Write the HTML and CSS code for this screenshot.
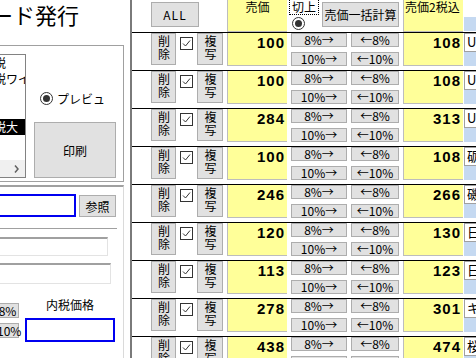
FILE: index.html
```html
<!DOCTYPE html>
<html lang="ja">
<head>
  <meta charset="UTF-8" />
  <title>カード発行</title>
  <link rel="stylesheet" href="styles.css">
</head>
<body>
  <div class="app">

    <!-- left side: print settings -->
    <aside class="side">
      <h1 class="title">カード発行</h1>

      <div class="group">
        <div class="listbox">
          <div class="item">課税</div>
          <div class="item">課税ワイド</div>
          <div class="item">&nbsp;</div>
          <div class="item">&nbsp;</div>
          <div class="item sel">課税大</div>
          <div class="hscroll">
            <span class="arrow">
              <svg width="5" height="8" viewBox="0 0 5 8"><path d="M1 0.5 L4 4 L1 7.5" fill="none" stroke="#606060" stroke-width="1.5"/></svg>
            </span>
          </div>
        </div>
        <div class="print-col">
          <label class="radio"><span class="radio-dot"></span>プレビュ</label>
          <button class="btn print">印刷</button>
        </div>
      </div>

      <div class="panel">
        <div class="ref-row">
          <div class="input"></div>
          <button class="btn ref">参照</button>
        </div>
        <div class="sep"></div>
        <div class="textbox tb1"></div>
        <div class="textbox tb2"></div>
        <div class="tax-row">
          <div class="rate-col">
            <button class="btn rate">8%</button>
            <button class="btn rate">10%</button>
          </div>
          <div class="incl-col">
            <div class="incl-label">内税価格</div>
            <div class="input incl"></div>
          </div>
        </div>
      </div>
    </aside>

    <!-- price grid -->
    <main class="grid">
      <div class="hrow">
        <button class="btn all">ALL</button>
        <div class="hcell price-h">売価</div>
        <div class="kiri-wrap">
          <div class="kiri">
            <span class="kiri-label">切上</span>
            <span class="radio-dot kiri-radio"></span>
          </div>
          <button class="btn bulk">売価一括計算</button>
        </div>
        <div class="hcell tax-h">売価2税込</div>
        <div class="hmemo"><div class="memo-top"></div><div class="memo-bot"></div></div>
      </div>
      <div id="rows"></div>
    </main>
  </div>

  <script>
    const items = [
      { price: 100, taxed: 108, name: "UCC" },
      { price: 100, taxed: 108, name: "UCC" },
      { price: 284, taxed: 313, name: "UCC" },
      { price: 100, taxed: 108, name: "砺波" },
      { price: 246, taxed: 266, name: "磯" },
      { price: 120, taxed: 130, name: "日清" },
      { price: 113, taxed: 123, name: "日清" },
      { price: 278, taxed: 301, name: "キリン" },
      { price: 438, taxed: 474, name: "桜" }
    ];

    const check = `<svg class="chk" width="13" height="13" viewBox="0 0 13 13">
      <rect x="0.5" y="0.5" width="12" height="12" fill="#fff" stroke="#333"/>
      <path d="M3 6.5 L5.5 9 L10 3.5" fill="none" stroke="#333"/></svg>`;

    function renderRows() {
      const container = document.getElementById('rows');
      container.innerHTML = '';
      items.forEach((item) => {
        const div = document.createElement('div');
        div.className = 'row';
        div.innerHTML = `
          <div class="blank"></div>
          <button class="btn tall"><span class="vtext">削除</span></button>
          ${check}
          <button class="btn tall"><span class="vtext">複写</span></button>
          <div class="num">${item.price}</div>
          <div class="pct">
            <button class="btn">8%→</button>
            <button class="btn">10%→</button>
          </div>
          <div class="pct">
            <button class="btn">←8%</button>
            <button class="btn">←10%</button>
          </div>
          <div class="num">${item.taxed}</div>
          <div class="memo">
            <div class="memo-top">${item.name}</div>
            <div class="memo-bot"></div>
          </div>
        `;
        container.appendChild(div);
      });
    }

    renderRows();
  </script>
</body>
</html>
```

FILE: styles.css
```css
body {
  margin: 0;
  background: #fff;
  font-family: "Noto Sans CJK JP", sans-serif;
  font-size: 12px;
  color: #000;
  overflow: hidden;
}

.app {
  display: flex;
  height: 358px;
  overflow: hidden;
}

/* left side */
.side {
  width: 124px;
  flex-shrink: 0;
  overflow: hidden;
  display: flex;
  flex-direction: column;
}

.title {
  margin: 0 0 0 -31px;
  height: 28px;
  font-size: 22px;
  font-weight: normal;
  line-height: 28px;
  white-space: nowrap;
}

.group {
  margin: 17px 0 0 -20px;
  width: 144px;
  height: 137px;
  flex-shrink: 0;
  box-sizing: border-box;
  border: 1px solid #a0a0a0;
  display: flex;
}

.listbox {
  margin-top: 8px;
  width: 45px;
  height: 124px;
  box-sizing: border-box;
  border: 1px solid #828282;
  display: flex;
  flex-direction: column;
  overflow: hidden;
}

.item {
  height: 16px;
  line-height: 16px;
  white-space: nowrap;
  overflow: hidden;
}

.item.sel {
  background: #000;
  color: #fff;
}

.hscroll {
  margin-top: auto;
  height: 17px;
  background: #f0f0f0;
  display: flex;
  justify-content: flex-end;
}

.hscroll .arrow {
  width: 17px;
  display: flex;
  align-items: center;
  justify-content: center;
}

.print-col {
  margin-left: 8px;
  display: flex;
  flex-direction: column;
}

.radio {
  margin: 45px 0 0 6px;
  height: 14px;
  display: flex;
  align-items: center;
  gap: 4px;
  white-space: nowrap;
}

.radio-dot {
  width: 13px;
  height: 13px;
  box-sizing: border-box;
  border: 1px solid #333;
  border-radius: 50%;
  background: #fff;
  display: flex;
  align-items: center;
  justify-content: center;
}

.radio-dot::after {
  content: "";
  width: 7px;
  height: 7px;
  border-radius: 50%;
  background: #333;
}

.btn {
  font: inherit;
  color: #000;
  background: #e1e1e1;
  border: 1px solid #adadad;
  padding: 0;
  box-sizing: border-box;
  white-space: nowrap;
}

.print {
  margin-top: 17px;
  width: 82px;
  height: 56px;
}

.panel {
  margin: 3px 0 0 -20px;
  width: 144px;
  flex: 1;
  box-sizing: border-box;
  border-top: 2px solid #a0a0a0;
  border-right: 1px solid #dadada;
}

.ref-row {
  display: flex;
  margin-top: 7px;
}

.input {
  box-sizing: border-box;
  border: 2px solid #0000f0;
  background: #fff;
}

.ref-row .input {
  width: 96px;
  height: 23px;
}

.ref {
  margin: 1px 0 0 3px;
  width: 37px;
  height: 22px;
}

.sep {
  margin-top: 11px;
  width: 137px;
  border-top: 1px solid #a0a0a0;
}

.textbox {
  box-sizing: border-box;
  border: 1px solid #e3e3e3;
  border-top: 2px solid #a0a0a0;
}

.tb1 {
  margin-top: 8px;
  width: 128px;
  height: 19px;
}

.tb2 {
  margin-top: 7px;
  width: 131px;
  height: 21px;
}

.tax-row {
  display: flex;
}

.rate-col {
  margin-left: 16px;
  width: 23px;
  display: flex;
  flex-direction: column;
}

.rate {
  height: 15px;
  line-height: 13px;
  margin-top: 5px;
}

.rate:first-child {
  margin-top: 19px;
}

.incl-col {
  margin-left: 6px;
  width: 90px;
  display: flex;
  flex-direction: column;
  align-items: center;
}

.incl-label {
  margin-top: 14px;
  line-height: 14px;
}

.incl {
  margin-top: 6px;
  width: 90px;
  height: 24px;
}

/* grid */
.grid {
  margin-left: 6px;
  flex: 1;
  border-left: 2px solid #7a7a7a;
  overflow: hidden;
}

.hrow,
.row {
  display: grid;
  grid-template-columns: 15px 25px 13px 26px 60px 56px 48px 60px 1fr;
  column-gap: 4px;
  align-items: start;
}

.hrow {
  height: 32px;
}

.row {
  height: 38px;
  box-sizing: border-box;
  border-top: 1px solid #000;
}

.all {
  grid-column: 2 / 5;
  justify-self: start;
  margin-top: 2px;
  width: 48px;
  height: 25px;
  letter-spacing: 1px;
}

.hcell {
  height: 32px;
  box-sizing: border-box;
  background: #ffff99;
  border-left: 1px solid #bdbdbd;
  border-bottom: 1px solid #bdbdbd;
  line-height: 14px;
}

.price-h {
  grid-column: 5;
  text-align: center;
}

.tax-h {
  grid-column: 8;
  padding-left: 1px;
  white-space: nowrap;
}

.kiri-wrap {
  grid-column: 6 / 8;
  display: flex;
}

.kiri {
  margin-left: -2px;
  display: flex;
  flex-direction: column;
  align-items: flex-start;
}

.kiri-label {
  margin-top: -1px;
  padding: 0 2px;
  line-height: 14px;
  border: 1px dotted #000;
}

.kiri-radio {
  margin: 2px 0 0 3px;
}

.bulk {
  margin: 2px 0 0 auto;
  width: 77px;
  height: 25px;
}

.hmemo,
.memo {
  grid-column: 9;
  margin-left: -3px;
  display: flex;
  flex-direction: column;
  overflow: hidden;
}

.hmemo .memo-top {
  height: 17px;
  border: none;
}

.hmemo .memo-bot {
  height: 14px;
}

.memo-top {
  height: 19px;
  box-sizing: border-box;
  border: 1px solid #a0a0a0;
  border-right: none;
  background: #fff;
  padding-left: 2px;
  line-height: 16px;
  font-size: 13px;
  white-space: nowrap;
}

.memo-bot {
  height: 14px;
  background: #c5d9f1;
}

.tall {
  height: 32px;
}

.vtext {
  writing-mode: vertical-rl;
  letter-spacing: 1px;
  line-height: 14px;
}

.chk {
  margin-top: 4px;
  display: block;
}

.num {
  height: 33px;
  box-sizing: border-box;
  background: #ffff99;
  border-left: 1px solid #bdbdbd;
  border-bottom: 1px solid #bdbdbd;
  padding: 2px 2px 0 0;
  text-align: right;
  font: bold 15px/15px "Liberation Sans", sans-serif;
  letter-spacing: 1px;
}

.pct {
  display: flex;
  flex-direction: column;
  gap: 5px;
}

.pct .btn {
  height: 14px;
  line-height: 12px;
}
```
